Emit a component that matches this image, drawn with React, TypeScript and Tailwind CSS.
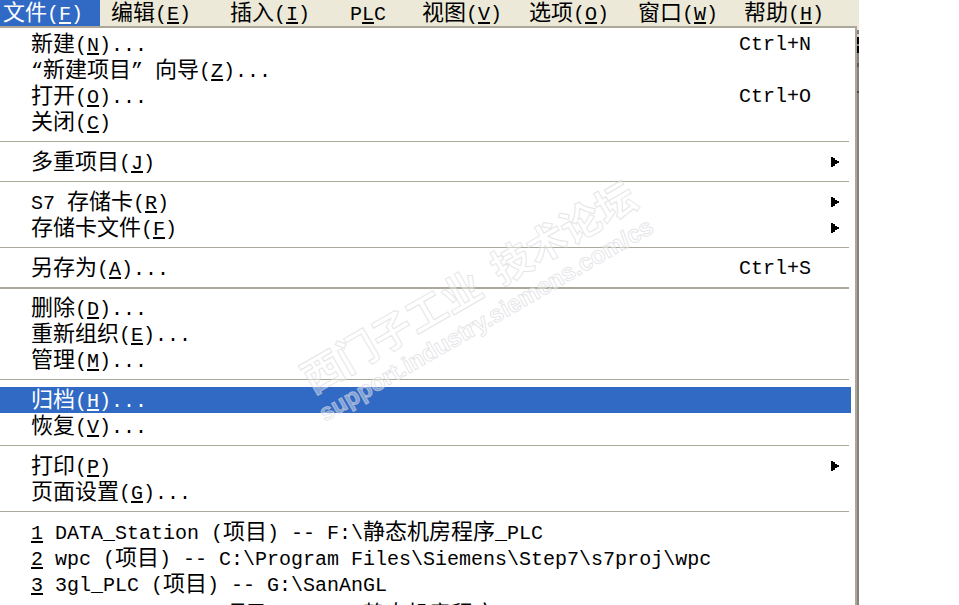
import { Fragment } from "react";

type Entry = {
  before: string;
  hotkey: string;
  after?: string;
  shortcut?: string;
  submenu?: boolean;
  active?: boolean;
};

const MENUS = [
  { before: "文件(", hotkey: "F", after: ")", className: "w-[100px] pl-[3px] bg-[#316ac5] text-white" },
  { before: "编辑(", hotkey: "E", after: ")", className: "w-[119px] pl-[11px]" },
  { before: "插入(", hotkey: "I", after: ")", className: "w-[120px] pl-[11px]" },
  { before: "P", hotkey: "L", after: "C", className: "w-[72px] pl-[11px]" },
  { before: "视图(", hotkey: "V", after: ")", className: "w-[107px] pl-[11px]" },
  { before: "选项(", hotkey: "O", after: ")", className: "w-[109px] pl-[11px]" },
  { before: "窗口(", hotkey: "W", after: ")", className: "w-[106px] pl-[11px]" },
  { before: "帮助(", hotkey: "H", after: ")", className: "w-[106px] pl-[11px]" },
];

const GROUPS: Entry[][] = [
  [
    { before: "新建(", hotkey: "N", after: ")...", shortcut: "Ctrl+N" },
    { before: "“新建项目” 向导(", hotkey: "Z", after: ")..." },
    { before: "打开(", hotkey: "O", after: ")...", shortcut: "Ctrl+O" },
    { before: "关闭(", hotkey: "C", after: ")" },
  ],
  [{ before: "多重项目(", hotkey: "J", after: ")", submenu: true }],
  [
    { before: "S7 存储卡(", hotkey: "R", after: ")", submenu: true },
    { before: "存储卡文件(", hotkey: "F", after: ")", submenu: true },
  ],
  [{ before: "另存为(", hotkey: "A", after: ")...", shortcut: "Ctrl+S" }],
  [
    { before: "删除(", hotkey: "D", after: ")..." },
    { before: "重新组织(", hotkey: "E", after: ")..." },
    { before: "管理(", hotkey: "M", after: ")..." },
  ],
  [
    { before: "归档(", hotkey: "H", after: ")...", active: true },
    { before: "恢复(", hotkey: "V", after: ")..." },
  ],
  [
    { before: "打印(", hotkey: "P", after: ")", submenu: true },
    { before: "页面设置(", hotkey: "G", after: ")..." },
  ],
  [
    { before: "", hotkey: "1", after: " DATA_Station (项目) -- F:\\静态机房程序_PLC" },
    { before: "", hotkey: "2", after: " wpc (项目) -- C:\\Program Files\\Siemens\\Step7\\s7proj\\wpc" },
    { before: "", hotkey: "3", after: " 3gl_PLC (项目) -- G:\\SanAnGL" },
    { before: "", hotkey: "4", after: " DATA_Station (项目) -- G:\\静态机房程序" },
  ],
];

// Chinese runs are set one step larger than the monospaced Latin text
function Mixed({ text }: { text: string }) {
  return (
    <>
      {text.split(/([\u4e00-\u9fff]+)/).map((part, i) =>
        i % 2 ? (
          <span key={i} className="text-[22px]">
            {part}
          </span>
        ) : (
          part
        )
      )}
    </>
  );
}

function Label({ before, hotkey, after = "" }: Pick<Entry, "before" | "hotkey" | "after">) {
  return (
    <span className="block pt-1 whitespace-pre">
      <Mixed text={before} />
      <span className="underline underline-offset-2">{hotkey}</span>
      <Mixed text={after} />
    </span>
  );
}

function MenuItem({ item }: { item: Entry }) {
  return (
    <button
      role="menuitem"
      className={`mr-1 flex h-[26px] shrink-0 items-center justify-between pl-[31px] text-left last:mt-1 ${
        item.active ? "bg-[#316ac5] text-white" : ""
      }`}
    >
      <Label before={item.before} hotkey={item.hotkey} after={item.after} />
      {item.shortcut && <span className="w-28 pt-0.5">{item.shortcut}</span>}
      {item.submenu && (
        <svg viewBox="0 0 8 10" className="mr-3 h-2.5 w-2" fill="currentColor" shapeRendering="crispEdges">
          <path d="M0 0h2v1h2v2h2v1h2v2H6v1H4v2H2v1H0z" />
        </svg>
      )}
    </button>
  );
}

// Outer edge of the menu, with slivers of the window behind it near the top
function Shadow() {
  return (
    <div className="flex w-0.5 flex-col bg-[#85837a]">
      <div className="h-1 bg-[#ece9d8]" />
      <div className="h-1 bg-[#85837a]" />
      <div className="h-[3px] bg-[#d4d0c8]" />
      <div className="h-[7px] bg-black" />
      <div className="h-0.5 bg-[#85837a]" />
      <div className="h-[7px] bg-black" />
      <div className="mt-2.5 h-1 bg-[#5c5b56]" />
      <div className="mt-6 h-0.5 bg-[#4a4946]" />
    </div>
  );
}

function Watermark() {
  return (
    <svg
      viewBox="0 0 959 605"
      className="pointer-events-none absolute top-0 left-0 h-[605px] w-[959px]"
      fill="#ffffff"
      fillOpacity="0.4"
      stroke="#d4d4d8"
      strokeOpacity="0.6"
      strokeWidth="1"
    >
      <g transform="translate(325 422) rotate(-30)">
        <text x="3" y="-30" fontSize="40" className="font-['Noto_Sans_CJK_SC',sans-serif] font-bold">
          西门子工业&nbsp;&nbsp;技术论坛
        </text>
        <text x="0" y="0" fontSize="24" className="font-['Liberation_Sans',sans-serif] font-bold">
          support.industry.siemens.com/cs
        </text>
      </g>
    </svg>
  );
}

export default function App() {
  return (
    <div className="relative h-screen overflow-hidden bg-white font-['Liberation_Mono','Noto_Sans_CJK_SC',monospace] text-[20px] leading-[26px] text-black">
      <div className="mr-[100px]">
        <nav className="flex h-[26px] items-stretch bg-[#ece9d8]">
          {MENUS.map((m) => (
            <button key={m.hotkey} className={`flex shrink-0 items-center text-left ${m.className}`}>
              <Label before={m.before} hotkey={m.hotkey} after={m.after} />
            </button>
          ))}
        </nav>

        <div className="flex">
          <div
            role="menu"
            className="flex flex-1 flex-col border-t-2 border-r-2 border-t-[#aca899] border-r-[#aca899] pt-[3px]"
          >
            {GROUPS.map((group, i) => (
              <Fragment key={i}>
                {i > 0 && (
                  <hr
                    className={`mt-1.5 mr-1.5 border-[#aca899] ${i === 4 ? "mb-1.5 border-t-2" : "mb-[7px]"}`}
                  />
                )}
                {group.map((item) => (
                  <MenuItem key={item.before + item.hotkey} item={item} />
                ))}
              </Fragment>
            ))}
          </div>
          <Shadow />
        </div>
      </div>
      <Watermark />
    </div>
  );
}
